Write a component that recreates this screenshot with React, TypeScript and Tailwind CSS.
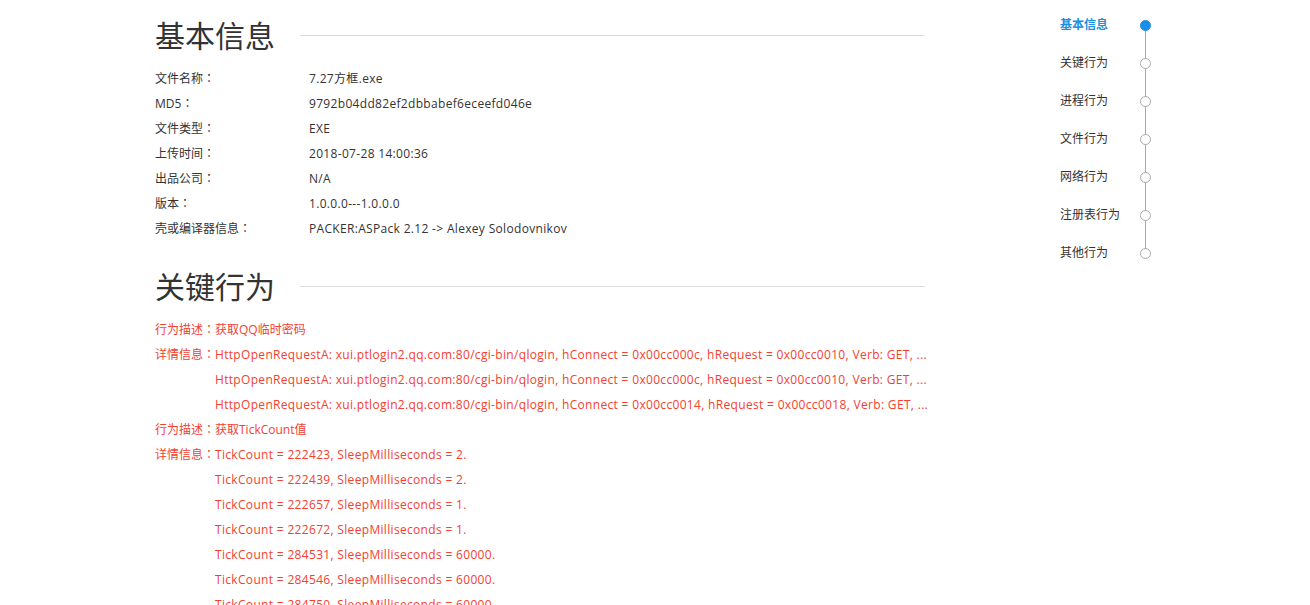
import React from 'react'

const font = { fontFamily: '"Open Sans", "Noto Sans CJK SC", sans-serif' }
const colonFont = { fontFamily: '"Noto Sans CJK TC", sans-serif' }

const baseInfo: [string, string][] = [
  ['文件名称', '7.27方框.exe'],
  ['MD5', '9792b04dd82ef2dbbabef6eceefd046e'],
  ['文件类型', 'EXE'],
  ['上传时间', '2018-07-28 14:00:36'],
  ['出品公司', 'N/A'],
  ['版本', '1.0.0.0---1.0.0.0'],
  ['壳或编译器信息', 'PACKER:ASPack 2.12 -> Alexey Solodovnikov'],
]

const behaviors = [
  {
    desc: '获取QQ临时密码',
    details: [
      'HttpOpenRequestA: xui.ptlogin2.qq.com:80/cgi-bin/qlogin, hConnect = 0x00cc000c, hRequest = 0x00cc0010, Verb: GET, ...',
      'HttpOpenRequestA: xui.ptlogin2.qq.com:80/cgi-bin/qlogin, hConnect = 0x00cc000c, hRequest = 0x00cc0010, Verb: GET, ...',
      'HttpOpenRequestA: xui.ptlogin2.qq.com:80/cgi-bin/qlogin, hConnect = 0x00cc0014, hRequest = 0x00cc0018, Verb: GET, ...',
    ],
  },
  {
    desc: '获取TickCount值',
    details: [
      'TickCount = 222423, SleepMilliseconds = 2.',
      'TickCount = 222439, SleepMilliseconds = 2.',
      'TickCount = 222657, SleepMilliseconds = 1.',
      'TickCount = 222672, SleepMilliseconds = 1.',
      'TickCount = 284531, SleepMilliseconds = 60000.',
      'TickCount = 284546, SleepMilliseconds = 60000.',
      'TickCount = 284750, SleepMilliseconds = 60000.',
    ],
  },
]

const navItems = ['基本信息', '关键行为', '进程行为', '文件行为', '网络行为', '注册表行为', '其他行为']

const Colon = () => <span style={colonFont}>：</span>

const SectionTitle = ({ title }: { title: string }) => (
  <div className="flex items-center h-10 mb-[10px]">
    <h2 className="text-[30px] leading-10 text-[#333] whitespace-nowrap">{title}</h2>
    <div className="flex-1 h-px bg-[#dcdcdc] ml-[25px] -mt-[2px]" />
  </div>
)

export default function App() {
  return (
    <div className="w-[1310px] h-[605px] overflow-hidden bg-white relative" style={font}>
      <div className="flex">
        {/* main content */}
        <div className="w-[770px] ml-[155px] pt-4">
          <SectionTitle title="基本信息" />
          <div className="text-xs text-[#333]">
            {baseInfo.map(([k, v]) => (
              <div key={k} className="flex h-[25px] items-center whitespace-nowrap">
                <div className="w-[154px] shrink-0">
                  {k}
                  <Colon />
                </div>
                <div className="tracking-[0.32px]">{v}</div>
              </div>
            ))}
          </div>

          <div className="mt-[26px]">
            <SectionTitle title="关键行为" />
            <div className="text-xs text-[#f3412f]">
              {behaviors.map((b) => (
                <div key={b.desc}>
                  <div className="flex h-[25px] items-center whitespace-nowrap">
                    <span className="w-[60px] shrink-0">
                      行为描述<Colon />
                    </span>
                    <span>{b.desc}</span>
                  </div>
                  {b.details.map((d, i) => (
                    <div key={i} className="flex h-[25px] items-center whitespace-nowrap">
                      <span className="w-[60px] shrink-0">
                        {i === 0 ? (
                          <>
                            详情信息<Colon />
                          </>
                        ) : null}
                      </span>
                      <span className="tracking-[0.32px]">{d}</span>
                    </div>
                  ))}
                </div>
              ))}
            </div>
          </div>
        </div>

        {/* side nav */}
        <div className="ml-[135px] pt-[6px] relative">
          <div className="absolute left-[85px] top-[25px] h-[227px] w-px bg-[#aaa]" />
          {navItems.map((n, i) => (
            <div key={n} className="flex items-center h-[38px] relative">
              <span
                className={
                  'w-[80px] text-xs ' +
                  (i === 0 ? 'text-[#1a8fe3] font-bold' : 'text-[#333]')
                }
              >
                {n}
              </span>
              <span
                className={
                  'w-[11px] h-[11px] rounded-full border ' +
                  (i === 0 ? 'bg-[#1a8fe3] border-[#1a8fe3]' : 'bg-white border-[#aaa]')
                }
              />
            </div>
          ))}
        </div>
      </div>
    </div>
  )
}
